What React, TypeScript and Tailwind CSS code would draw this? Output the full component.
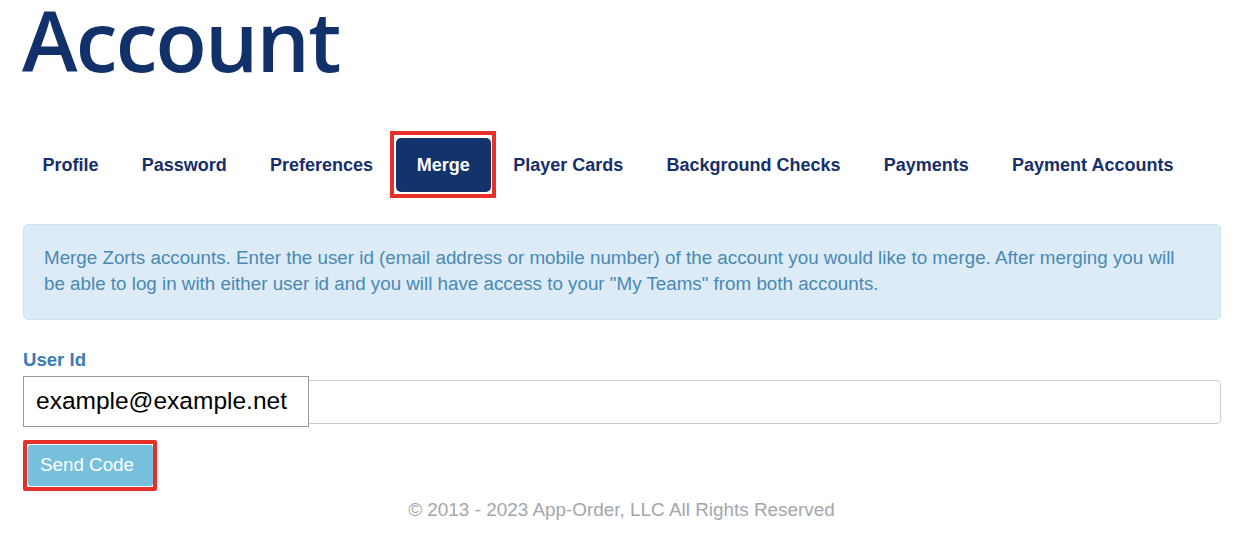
import React from "react";

const tabs = ["Profile", "Password", "Preferences", "Merge", "Player Cards", "Background Checks", "Payments", "Payment Accounts"];

export default function App() {
  return (
    <div className="w-[1252px] h-[556px] bg-white overflow-hidden" style={{ fontFamily: '"Liberation Sans", Arial, sans-serif' }}>
      <div className="pl-[22px] pr-[31px]">
        <h1
          className="text-[84px] font-semibold leading-[80px] text-[#12316b] h-[96px] tracking-[-1.8px]"
          style={{ fontFamily: '"Open Sans", sans-serif' }}
        >
          Account
        </h1>
        <div className="mt-[42px] flex gap-[2px] h-[54px] items-center">
          {tabs.map((t) =>
            t === "Merge" ? (
              <div key={t} className="relative">
                <div className="h-[54px] px-[21px] flex items-center rounded-[5px] bg-[#12336c] text-white text-[18px] font-bold">
                  {t}
                </div>
                <div className="absolute -left-[6px] -right-[5px] -top-[7px] -bottom-[6px] border-[4px] border-[#e8302a] pointer-events-none" />
              </div>
            ) : (
              <div key={t} className="h-[54px] px-[20.6px] flex items-center text-[18px] font-bold text-[#162e6b]">
                {t}
              </div>
            )
          )}
        </div>
        <div className="mt-[32px] ml-[1px] h-[96px] rounded-[5px] border border-[#c9e5f1] bg-[#dcebf6] px-[20px] pt-[20px] text-[18.8px] leading-[26px] text-[#4a89b2]">
          Merge Zorts accounts. Enter the user id (email address or mobile number) of the account you would like to merge. After merging you will be able to log in with either user id and you will have access to your "My Teams" from both accounts.
        </div>
        <div className="mt-[30px] ml-[1px] text-[18.6px] font-bold text-[#3a7bb8] leading-[20px]">User Id</div>
        <div className="relative mt-[10px] ml-[1px] h-[44px] rounded-[4px] border border-[#cccccc] bg-white">
          <div className="absolute -left-[1px] -top-[5px] w-[286px] h-[51px] border border-[#9a9a9a] bg-white flex items-center pl-[12px] text-[24.5px] text-black">
            example@example.net
          </div>
        </div>
        <div className="mt-[16px] ml-[1px] relative w-[134px] h-[51px] border-[4px] border-[#e8302a] rounded-[2px]">
          <div className="ml-[1px] mt-[1px] w-[125px] h-[41px] bg-[#76bfdd] rounded-[3px] flex items-center pl-[12px] text-[18.8px] text-white">
            Send Code
          </div>
        </div>
        <div className="mt-[7px] text-center text-[18.9px] text-[#a3a6ad] leading-[24px]">
          © 2013 - 2023 App-Order, LLC All Rights Reserved
        </div>
      </div>
    </div>
  );
}
